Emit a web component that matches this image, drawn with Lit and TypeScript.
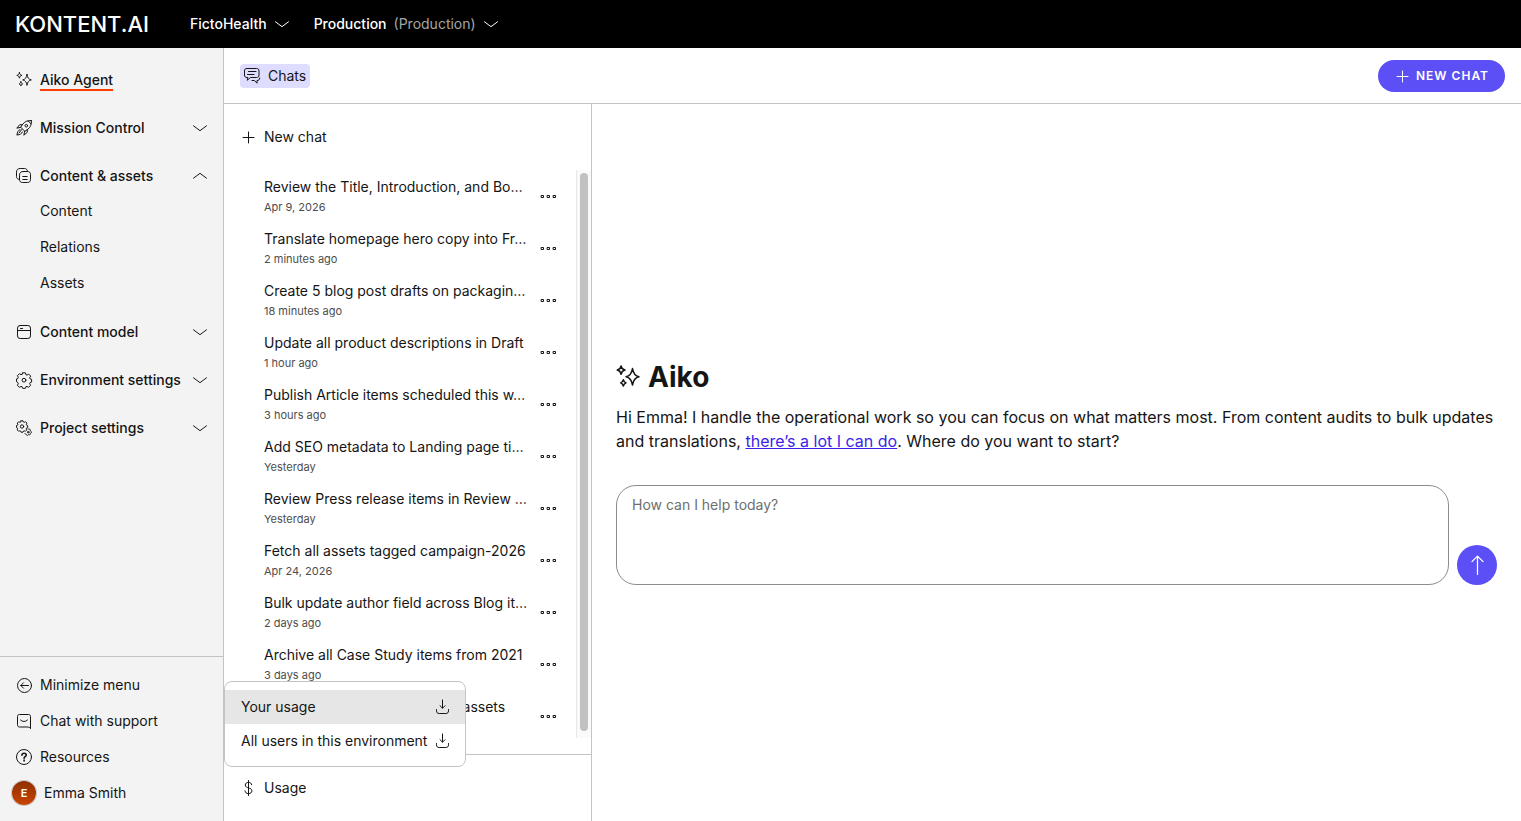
import { LitElement, html, css, svg, type TemplateResult } from "lit";
import { customElement } from "lit/decorators.js";

const shapes: Record<string, TemplateResult> = {
  sparkles: svg`<path d="M11 2.400c.6 3.500 1.600 4.900 4.300 5.500-2.700.6-3.700 2-4.300 5.500-.6-3.500-1.600-4.900-4.300-5.500 2.700-.6 3.700-2 4.300-5.500z"/><path d="M3.400.6c.3 1.700 1 2.500 2.600 2.800-1.600.3-2.300 1.100-2.600 2.800-.3-1.700-1-2.500-2.600-2.800 1.600-.3 2.300-1.100 2.600-2.800z"/><path d="M4.900 9.800c.3 1.200.7 1.800 1.800 2.100-1.100.3-1.500.9-1.800 2.100-.3-1.200-.7-1.800-1.800-2.100 1.100-.3 1.500-.9 1.800-2.100z"/>`,
  rocket: svg`<path d="M15.400.6c-4-.2-6.600.9-8.600 3.500L4.700 7.200l4.100 4.100 3.100-2.100c2.600-2 3.700-4.600 3.500-8.600z"/><path d="M6.500 4.600 3.600 4.800.8 8.200l3.900-.9M11.400 9.500l-.2 2.900-3.400 2.800.9-3.900M12.100.900l3 3"/><circle cx="10.300" cy="5.700" r="1.300"/><path d="M4 9.600c-1.700.5-2.600 2.300-3.100 5.500 3.200-.5 5-1.400 5.500-3.100M5.700 9.600l-2.700 3.400"/>`,
  copies: svg`<path d="M3.500 11.500C1.500 11.300.5 10.300.5 8.300V4.200C.5 1.800 1.800.5 4.200.5h4.100c2 0 3 1 3.200 3"/><path d="M7.200 3.500h4.100c2.200 0 3.200 1 3.200 3.200v4.600c0 2.200-1 3.200-3.200 3.200H6.700c-2.200 0-3.200-1-3.200-3.200V7.200c0-2.400 1.300-3.700 3.700-3.700z"/><path d="M6.800 8.500h4.400M6.800 11.500h4.400"/>`,
  model: svg`<rect x="1.500" y="1.500" width="13" height="13" rx="2.600"/><path d="M1.500 6.500h13M4.500 4.500h2"/>`,
  gear: svg`<path d="M6.600.8h2.800l.5 1.900 1.100.4 1.700-1 2 2-1 1.700.4 1.100 1.500.4v2.800l-1.500.5-.4 1.100.9 1.600-2 2-1.600-.9-1.100.4-.5 1.500H6.600l-.5-1.500-1.100-.4-1.600.9-2-2 .9-1.600-.4-1.100L.5 9.700V6.900l1.400-.4.4-1.100-.9-1.700 2-2 1.600 1 1.100-.4z"/><circle cx="8" cy="8.200" r="1.900"/>`,
  gears: svg`<path d="M5 .8h2l.4 1.200.9.3 1.200-.6 1.400 1.400-.6 1.200.3.900 1.100.3v2l-1.100.4-.3.900.5 1.100-1.400 1.400-1.100-.5-.9.3-.4 1.100H5l-.4-1.100-.9-.3-1.100.5-1.400-1.400.5-1.100-.3-.9L.5 7.500v-2l1.100-.3.3-.9-.6-1.200L2.700 1.700l1.200.6.7-.3z"/><circle cx="6" cy="6.500" r="1.700"/><path d="M11.900 8.700c1 1.200 1.800-.1 2.300.8.500 1-.6 1.100.8 1.900 1 .6.800 1.200-.2 1.500-.9.400.2 1.400-.9 1.800-1 .4-1-.8-1.800.3-.7.900-1.300.7-1.500-.3-.2-1-1.400 0-1.700-.9"/><circle cx="12.200" cy="12.200" r=".8"/>`,
  minimize: svg`<circle cx="8.500" cy="8.500" r="7"/><path d="M12.500 8.500H4.800M7.500 5.800 4.800 8.500l2.700 2.700"/>`,
  support: svg`<path d="M14.500 15.200V3.700c0-1.500-.8-2.200-2.200-2.200H3.700c-1.500 0-2.200.7-2.200 2.200v8.100c0 1.500.7 2.200 2.200 2.200h7.500c1.200 0 2.200.3 3.300 1.200z"/><path d="M4.500 7C6.600 9 9.400 9 11.500 7"/>`,
  help: svg`<circle cx="8" cy="8" r="7.500"/><path stroke-width="1.600" d="M5.900 6.300c.1-1.300.9-2 2.200-2s2.100.7 2.100 1.800c0 1.600-2.100 1.600-2.100 3.200M8.100 11v1"/>`,
  chats: svg`<path d="M3.500 9.500H3C1.300 9.500.5 8.700.5 7V3C.5 1.300 1.300.5 3 .5h9.500C14.200.5 15 1.300 15 3v4c0 1.700-.8 2.500-2.500 2.500h-6L3.500 12z"/><path d="M4.500 3.500H12M3.500 6.500H10M8 12.500h2.500l2.500 2.700v-2.700c1.800 0 2.700-.8 2.700-2.500"/>`,
  plus: svg`<path d="M8.500 3v11M3 8.500h11"/>`,
  dollar: svg`<path d="M8.500.5v15M11.700 4.800c-.2-1.600-1.300-2.400-3.200-2.400S5.300 3.300 5.300 5c0 3.800 6.600 2 6.600 5.900 0 1.700-1.300 2.700-3.400 2.700s-3.300-1-3.500-2.700"/>`,
  download: svg`<path d="M7.500 1v8M5 6.700l2.500 2.500L10 6.700M1.500 10.500v1.300c0 1.800.9 2.700 2.700 2.700h6.600c1.800 0 2.700-.9 2.700-2.700v-1.300"/>`,
  down: svg`<path d="M1.500 5.800 8 10.700l6.500-4.900"/>`,
  up: svg`<path d="M1.500 10.200 8 5.300l6.500 4.900"/>`,
  send: svg`<path d="M8.400 1v14.500M4 5.300 8.400.9l4.400 4.400"/>`,
  dots: svg`<path d="M.5 6.500h2v2h-2zM6.500 6.500h2v2h-2zM12.500 6.500h2v2h-2z"/>`,
};

const icon = (name: string, cls = "") => html`
  <svg class="icon ${cls}" viewBox="0 0 16 16" aria-hidden="true">${shapes[name]}</svg>
`;

const shared = css`
  * {
    box-sizing: border-box;
  }
  .icon {
    display: block;
    width: 16px;
    height: 16px;
    flex: none;
    fill: none;
    stroke: currentColor;
    stroke-width: 1;
    stroke-linecap: round;
    stroke-linejoin: round;
    overflow: visible;
  }
  button {
    border: 0;
    padding: 0;
    background: none;
    color: inherit;
    font: inherit;
    letter-spacing: inherit;
    text-align: left;
    cursor: pointer;
  }
  a {
    color: inherit;
    text-decoration: none;
  }
  ul {
    list-style: none;
    margin: 0;
    padding: 0;
  }
`;

@customElement("top-bar")
export class TopBar extends LitElement {
  static styles = [
    shared,
    css`
      :host {
        display: flex;
        align-items: center;
        height: 48px;
        padding: 0 15px;
        background: #000;
        color: #fff;
        font-weight: 500;
      }
      .brand {
        width: 136px;
        margin-right: 39px;
        font-size: 22px;
        line-height: 32px;
        white-space: nowrap;
      }
      .picker {
        display: flex;
        align-items: center;
        gap: 7px;
        margin-right: 24px;
      }
      .env {
        color: #a6a6a6;
        font-weight: 400;
      }
    `,
  ];

  render() {
    return html`
      <a class="brand" href="#">KONTENT.AI</a>
      <button class="picker">FictoHealth ${icon("down")}</button>
      <button class="picker">
        Production <span class="env">(Production)</span> ${icon("down")}
      </button>
    `;
  }
}

interface Section {
  label: string;
  icon: string;
  active?: boolean;
  children?: string[];
}

@customElement("side-nav")
export class SideNav extends LitElement {
  static styles = [
    shared,
    css`
      :host {
        display: flex;
        flex-direction: column;
        justify-content: space-between;
        background: #f3f3f3;
        border-right: 1px solid #c4c4c4;
      }
      .sections {
        display: flex;
        flex-direction: column;
        gap: 16px;
        padding: 16px 15px 16px 16px;
      }
      .row {
        display: flex;
        align-items: center;
        gap: 8px;
        width: 100%;
        height: 32px;
        font-weight: 500;
        white-space: nowrap;
      }
      .grow {
        flex: 1;
      }
      .current {
        margin-top: 2px;
        border-bottom: 2px solid #ff3c00;
        line-height: 18px;
      }
      .child {
        display: flex;
        align-items: center;
        height: 36px;
        padding: 2px 0 0 24px;
      }
      .footer {
        padding: 10px 16px;
        border-top: 1px solid #c4c4c4;
      }
      .tool {
        display: flex;
        align-items: center;
        gap: 8px;
        height: 36px;
      }
      .user {
        margin-left: -4px;
      }
      .avatar {
        display: grid;
        place-items: center;
        width: 24px;
        height: 24px;
        border-radius: 50%;
        background: linear-gradient(#8f2f00, #c94400);
        box-shadow: 0 0 0 1px #c4c4c4;
        color: #fff;
        font-size: 11px;
        font-weight: 600;
      }
    `,
  ];

  private sections: Section[] = [
    { label: "Aiko Agent", icon: "sparkles", active: true },
    { label: "Mission Control", icon: "rocket" },
    { label: "Content & assets", icon: "copies", children: ["Content", "Relations", "Assets"] },
    { label: "Content model", icon: "model" },
    { label: "Environment settings", icon: "gear" },
    { label: "Project settings", icon: "gears" },
  ];

  private tools = [
    ["minimize", "Minimize menu"],
    ["support", "Chat with support"],
    ["help", "Resources"],
  ];

  private section(s: Section) {
    if (s.active) {
      return html`<li>
        <a class="row" href="#" aria-current="page">${icon(s.icon)}<span class="current">${s.label}</span></a>
      </li>`;
    }
    return html`<li>
      <button class="row" aria-expanded=${s.children ? "true" : "false"}>
        ${icon(s.icon)}<span class="grow">${s.label}</span>${icon(s.children ? "up" : "down")}
      </button>
      ${s.children
        ? html`<ul>
            ${s.children.map((c) => html`<li><a class="child" href="#">${c}</a></li>`)}
          </ul>`
        : null}
    </li>`;
  }

  render() {
    return html`
      <nav>
        <ul class="sections">
          ${this.sections.map((s) => this.section(s))}
        </ul>
      </nav>
      <div class="footer">
        ${this.tools.map(([i, label]) => html`<button class="tool">${icon(i)}${label}</button>`)}
        <button class="tool user"><span class="avatar">E</span>Emma Smith</button>
      </div>
    `;
  }
}

@customElement("chat-history")
export class ChatHistory extends LitElement {
  static styles = [
    shared,
    css`
      :host {
        display: flex;
        flex-direction: column;
        min-height: 0;
        border-right: 1px solid #c4c4c4;
      }
      .action {
        display: flex;
        align-items: center;
        gap: 8px;
        width: 100%;
        height: 66px;
        padding: 0 16px;
      }
      .scroller {
        display: flex;
        flex: 1;
        min-height: 0;
        margin-bottom: 16px;
      }
      .list {
        flex: 1;
        min-width: 0;
        padding: 1px 19px 0 40px;
        overflow: hidden;
      }
      .item {
        display: flex;
        align-items: center;
        justify-content: space-between;
        gap: 8px;
        height: 52px;
      }
      .open {
        flex: 1;
        min-width: 0;
        white-space: nowrap;
        line-height: 20px;
      }
      .open span {
        display: block;
      }
      .open .when {
        color: #4d4d4d;
        font-size: 11px;
      }
      .track {
        flex: none;
        width: 15px;
        padding: 3px;
        background: #fafafa;
        border-left: 1px solid #e8e8e8;
      }
      .thumb {
        width: 8px;
        height: calc(100% - 4px);
        border-radius: 4px;
        background: #c1c1c1;
      }
      .dots {
        stroke-linejoin: miter;
      }
      .usage {
        position: relative;
        border-top: 1px solid #c4c4c4;
      }
      .menu {
        position: absolute;
        left: 0;
        bottom: 54px;
        width: 242px;
        padding: 8px 0;
        border: 1px solid #c4c4c4;
        border-radius: 8px;
        background: #fff;
      }
      .option {
        display: flex;
        align-items: center;
        justify-content: space-between;
        width: 100%;
        height: 34px;
        padding: 0 14px 0 16px;
        white-space: nowrap;
      }
      .option.on {
        background: #e6e6e6;
      }
    `,
  ];

  private chats = [
    ["Review the Title, Introduction, and Bo…", "Apr 9, 2026"],
    ["Translate homepage hero copy into Fr…", "2 minutes ago"],
    ["Create 5 blog post drafts on packagin…", "18 minutes ago"],
    ["Update all product descriptions in Draft", "1 hour ago"],
    ["Publish Article items scheduled this w…", "3 hours ago"],
    ["Add SEO metadata to Landing page ti…", "Yesterday"],
    ["Review Press release items in Review …", "Yesterday"],
    ["Fetch all assets tagged campaign-2026", "Apr 24, 2026"],
    ["Bulk update author field across Blog it…", "2 days ago"],
    ["Archive all Case Study items from 2021", "3 days ago"],
    ["Generate alt text for all image assets", "4 days ago"],
  ];

  render() {
    return html`
      <button class="action">${icon("plus")}New chat</button>
      <div class="scroller">
        <ul class="list">
          ${this.chats.map(
            ([title, when]) => html`<li class="item">
              <button class="open"><span>${title}</span><span class="when">${when}</span></button>
              <button aria-label="More actions">${icon("dots", "dots")}</button>
            </li>`
          )}
        </ul>
        <div class="track"><div class="thumb"></div></div>
      </div>
      <div class="usage">
        <div class="menu" role="menu">
          <button class="option on" role="menuitem">Your usage ${icon("download")}</button>
          <button class="option" role="menuitem">All users in this environment ${icon("download")}</button>
        </div>
        <button class="action">${icon("dollar")}Usage</button>
      </div>
    `;
  }
}

@customElement("chat-welcome")
export class ChatWelcome extends LitElement {
  static styles = [
    shared,
    css`
      :host {
        display: flex;
        flex-direction: column;
        justify-content: center;
        min-width: 0;
        padding: 17px 24px 0;
      }
      h1 {
        display: flex;
        align-items: center;
        gap: 8px;
        margin: 0 0 8px;
        font-size: 28px;
        line-height: 40px;
        font-weight: 700;
      }
      h1 .icon {
        width: 24px;
        height: 24px;
      }
      p {
        margin: 0 0 32px;
        font-size: 16px;
        line-height: 24px;
      }
      p a {
        color: #3b1ee8;
        text-decoration: underline;
        text-underline-offset: 1px;
      }
      form {
        display: flex;
        align-items: flex-end;
        gap: 8px;
      }
      textarea {
        display: block;
        flex: 1;
        min-width: 0;
        height: 100px;
        padding: 9px 15px;
        border: 1px solid #8c8c8c;
        border-radius: 20px;
        background: #fff;
        color: inherit;
        font: inherit;
        letter-spacing: inherit;
        resize: none;
      }
      textarea::placeholder {
        color: #6f6f6f;
        opacity: 1;
      }
      .send {
        display: grid;
        place-items: center;
        width: 40px;
        height: 40px;
        border-radius: 50%;
        background: #5b4ff5;
        color: #fff;
      }
      .send .icon {
        width: 20px;
        height: 20px;
      }
    `,
  ];

  render() {
    return html`
      <h1>${icon("sparkles")}Aiko</h1>
      <p>
        Hi Emma! I handle the operational work so you can focus on what matters most. From content
        audits to bulk updates and translations, <a href="#">there’s a lot I can do</a>. Where do you
        want to start?
      </p>
      <form>
        <textarea aria-label="Message" placeholder="How can I help today?"></textarea>
        <button class="send" type="button" aria-label="Send">${icon("send")}</button>
      </form>
    `;
  }
}

@customElement("app-root")
export class AppRoot extends LitElement {
  static styles = [
    shared,
    css`
      :host {
        display: flex;
        flex-direction: column;
        height: 100vh;
        overflow: hidden;
        background: #fff;
        color: #151515;
        font-family: Inter, "Liberation Sans", sans-serif;
        font-size: 14px;
        line-height: 20px;
      }
      .body {
        display: grid;
        grid-template-columns: 224px minmax(0, 1fr);
        flex: 1;
        min-height: 0;
      }
      .page {
        display: flex;
        flex-direction: column;
        min-height: 0;
      }
      .toolbar {
        display: flex;
        align-items: center;
        justify-content: space-between;
        height: 56px;
        padding: 0 16px;
        border-bottom: 1px solid #c4c4c4;
      }
      .chats {
        display: flex;
        align-items: center;
        gap: 8px;
        height: 24px;
        padding: 0 4px;
        border-radius: 4px;
        background: #dedcff;
      }
      .new {
        display: flex;
        align-items: center;
        gap: 6px;
        height: 32px;
        padding: 0 16px;
        border-radius: 16px;
        background: #5b4ff5;
        color: #fff;
        font-size: 12px;
        font-weight: 600;
        letter-spacing: 1px;
      }
      .columns {
        display: grid;
        grid-template-columns: 368px minmax(0, 1fr);
        flex: 1;
        min-height: 0;
      }
    `,
  ];

  render() {
    return html`
      <top-bar></top-bar>
      <div class="body">
        <side-nav></side-nav>
        <main class="page">
          <div class="toolbar">
            <button class="chats">${icon("chats")}Chats</button>
            <button class="new">${icon("plus")}NEW CHAT</button>
          </div>
          <div class="columns">
            <chat-history></chat-history>
            <chat-welcome></chat-welcome>
          </div>
        </main>
      </div>
    `;
  }
}
